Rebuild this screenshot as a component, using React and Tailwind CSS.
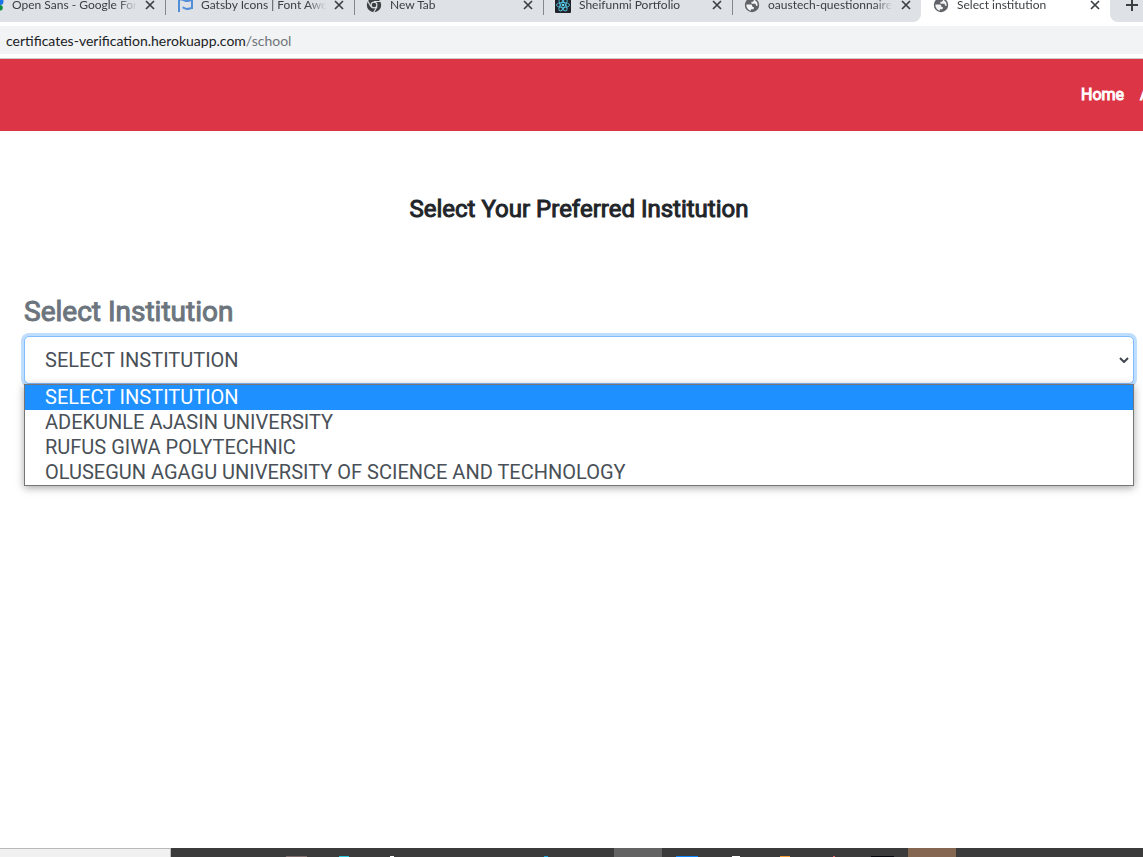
import { useState } from "react";

function FontsIcon() {
  return (
    <svg viewBox="0 0 16 16" className="size-4 shrink-0" aria-hidden="true">
      <path d="M1 3h8v10H1z" fill="#fbbc04" />
      <path d="M10 1h2a3.5 3.5 0 0 1 0 7h-2z" fill="#1a73e8" />
      <path d="M10 8h2a2.8 2.8 0 0 1 0 5.600h-2z" fill="#0d8f3f" />
    </svg>
  );
}

function FlagIcon() {
  return (
    <svg viewBox="0 0 16 16" className="size-4 shrink-0" fill="none" stroke="#528dd7" strokeWidth="2" aria-hidden="true">
      <path d="M2 15V2.500h2.500c2.500 0 3 1.500 5.500 1.500 2 0 3-1 5-1v8c-2 0-3 1-5 1-2 0-2.500-1.500-4.500-1.500" />
    </svg>
  );
}

function ChromeIcon() {
  return (
    <svg viewBox="0 0 16 16" className="size-4 shrink-0" aria-hidden="true">
      <circle cx="8" cy="8" r="7.200" fill="#3c4043" />
      <path d="M8 4.500h6.500M11 9.800 7.700 15.300M5 9.800 1.800 4.300" stroke="#dee1e6" strokeWidth="1.200" />
      <circle cx="8" cy="8" r="3.500" fill="#dee1e6" />
      <circle cx="8" cy="8" r="2.300" fill="#3c4043" />
    </svg>
  );
}

function ReactIcon() {
  return (
    <svg viewBox="0 0 16 16" className="size-4 shrink-0" fill="none" stroke="#53c1de" strokeWidth="0.900" aria-hidden="true">
      <rect width="16" height="16" rx="1" fill="#20232a" stroke="none" />
      <ellipse cx="8" cy="8" rx="6.600" ry="2.500" />
      <ellipse cx="8" cy="8" rx="6.600" ry="2.500" transform="rotate(60 8 8)" />
      <ellipse cx="8" cy="8" rx="6.600" ry="2.500" transform="rotate(120 8 8)" />
      <circle cx="8" cy="8" r="1.300" fill="#61dafb" stroke="none" />
    </svg>
  );
}

function GlobeIcon() {
  return (
    <svg viewBox="0 0 16 16" className="size-4 shrink-0" aria-hidden="true">
      <circle cx="8" cy="8" r="7.200" fill="#5f6368" />
      <path
        d="M2.300 7.500h4.200c1.300 0 1.700.7 1.700 1.500 0 .6.300.9 1 .9h.6v1.300c0 .7-.5 1.100-1.200 1.100H6.900v1.400C4 13.200 2.300 10.700 2.300 7.500z"
        fill="#f1f3f4"
      />
      <path
        d="M9.800 2.600v1c0 .8-.5 1.200-1.200 1.200H7.400v1.100c0 .6.400.8 1 .8h2.300c.8 0 1.200.5 1.200 1.200v.8h1.700c.3-2.700-1.200-5.100-3.800-6.100z"
        fill="#f1f3f4"
      />
    </svg>
  );
}

const tabs = [
  { title: "Open Sans - Google Fonts", Icon: FontsIcon, divider: true },
  { title: "Gatsby Icons | Font Awesome", Icon: FlagIcon, divider: true },
  { title: "New Tab", Icon: ChromeIcon, divider: true },
  { title: "Sheifunmi Portfolio", Icon: ReactIcon, divider: true },
  { title: "oaustech-questionnaire", Icon: GlobeIcon, last: true },
  { title: "Select institution", Icon: GlobeIcon, active: true },
];

function Tab({ title, Icon, divider, last, active }) {
  return (
    <div
      className={`flex h-[22px] shrink-0 ${active ? "bg-white pl-3" : "bg-[#dee1e6] pl-[11px]"} ${last ? "w-[188px] rounded-br-lg" : "w-[189px]"}`}
    >
      <div className="-mt-[3px] flex h-4 min-w-0 flex-1 items-center">
        <Icon />
        <span className="ml-2 w-[125px] shrink-0 overflow-hidden whitespace-nowrap mask-r-from-85% mask-r-to-100%">
          {title}
        </span>
        <button type="button" aria-label={`Close ${title}`} className="ml-2 shrink-0">
          <svg viewBox="0 0 10 10" className="size-[10px]" stroke="#3c4043" strokeWidth="1.700" aria-hidden="true">
            <path d="M1 1l8 8M9 1 1 9" />
          </svg>
        </button>
      </div>
      {divider && <span className="h-[15px] w-px bg-[#84878b]" />}
    </div>
  );
}

function BrowserChrome() {
  return (
    <div className="overflow-hidden border-b border-[#c8cacc] bg-white font-[Lato,'Open_Sans',sans-serif] text-[#3c4043]">
      <div className="flex overflow-hidden text-[12px] leading-4">
        <div className="-ml-[23px] flex shrink-0">
          {tabs.map((tab) => (
            <Tab key={tab.title} {...tab} />
          ))}
        </div>
        <div className="h-[22px] min-w-8 flex-1 rounded-bl-lg bg-[#dee1e6] pl-4">
          <button type="button" aria-label="New tab" className="block">
            <svg viewBox="0 0 12 12" className="size-3" stroke="#3c4043" strokeWidth="2" aria-hidden="true">
              <path d="M0 5h12M6 0v11" />
            </svg>
          </button>
        </div>
      </div>
      <div className="my-1 flex h-7 items-center bg-[#f1f3f4] px-[6px] text-[14px]">
        <span className="text-[#202124]">certificates-verification.herokuapp.com</span>
        <span className="text-[#70757a]">/school</span>
      </div>
    </div>
  );
}

const institutions = [
  "SELECT INSTITUTION",
  "ADEKUNLE AJASIN UNIVERSITY",
  "RUFUS GIWA POLYTECHNIC",
  "OLUSEGUN AGAGU UNIVERSITY OF SCIENCE AND TECHNOLOGY",
];

function InstitutionField() {
  const [value, setValue] = useState(institutions[0]);
  return (
    <div className="pr-[9px] pl-6">
      <label
        htmlFor="institution"
        className="block text-[28px] leading-[34px] text-[#6c757d] [-webkit-text-stroke:1px_#6c757d]"
      >
        Select Institution
      </label>
      <div className="relative mt-[7px]">
        <select
          id="institution"
          value={value}
          onChange={(e) => setValue(e.target.value)}
          className="block h-12 w-full appearance-none rounded-[5px] border border-[#80bdff] bg-white px-5 text-[20px] text-[#495057] shadow-[0_0_0_3px_#bfdeff] outline-none"
        >
          {institutions.map((name) => (
            <option key={name}>{name}</option>
          ))}
        </select>
        <svg
          viewBox="0 0 10 6"
          className="pointer-events-none absolute top-[21px] right-[5px] h-[6px] w-[10px]"
          fill="none"
          stroke="#3f464c"
          strokeWidth="2"
          aria-hidden="true"
        >
          <path d="M1 1l4 4 4-4" />
        </svg>
        <ul
          role="listbox"
          aria-label="Institutions"
          className="absolute top-full right-0 left-0 border border-[#767676] bg-white text-[20px] leading-[25px] text-[#495057] shadow-[0_2px_8px_rgba(0,0,0,0.35)]"
        >
          {institutions.map((name) => (
            <li
              key={name}
              role="option"
              aria-selected={name === value}
              onClick={() => setValue(name)}
              className={`px-5 ${name === value ? "bg-[#1e90ff] text-white" : ""}`}
            >
              {name}
            </li>
          ))}
        </ul>
      </div>
    </div>
  );
}

function Taskbar() {
  return (
    <footer className="mt-auto flex h-[9px] overflow-hidden bg-[#3b3b3b]">
      <div className="w-[171px] shrink-0 border-t border-r border-[#b9b9b9] bg-[#f1f1f1]" />
      <div className="flex shrink-0 items-end">
        <span className="ml-[115px] h-px w-[21px] bg-[#7d6b6b]" />
        <span className="ml-8 h-px w-[10px] bg-[#28c8dc]" />
        <span className="ml-[41px] h-px w-1 bg-white" />
        <span className="ml-[150px] h-px w-1 bg-[#1ba5d8]" />
        <span className="ml-[66px] h-full w-12 bg-[#636363]" />
        <span className="ml-[14px] h-px w-[22px] bg-[#0a84ff]" />
        <span className="ml-[34px] h-px w-2 bg-white" />
        <span className="ml-10 h-px w-[10px] bg-[#f59b32]" />
        <span className="ml-[43px] h-px w-[2px] bg-[#e8606a]" />
        <span className="ml-9 h-px w-[23px] bg-[#05070d]" />
        <span className="ml-[14px] h-full w-12 bg-[#856650]" />
      </div>
    </footer>
  );
}

export default function App() {
  return (
    <div className="flex min-h-screen flex-col overflow-hidden bg-white font-[Roboto,sans-serif]">
      <BrowserChrome />
      <header className="flex h-[72px] items-center justify-end bg-[#dc3545]">
        <nav className="flex w-[62px] gap-4 overflow-hidden text-[16px] leading-6 whitespace-nowrap text-white [-webkit-text-stroke:1px_white]">
          <a href="#home">Home</a>
          <a href="#about">About</a>
        </nav>
      </header>
      <main className="pt-16">
        <h1 className="pl-[15px] text-center text-[24px] leading-7 text-[#212529] [-webkit-text-stroke:1px_#212529]">
          Select Your Preferred Institution
        </h1>
        <div className="pt-[72px]">
          <InstitutionField />
        </div>
      </main>
      <Taskbar />
    </div>
  );
}
